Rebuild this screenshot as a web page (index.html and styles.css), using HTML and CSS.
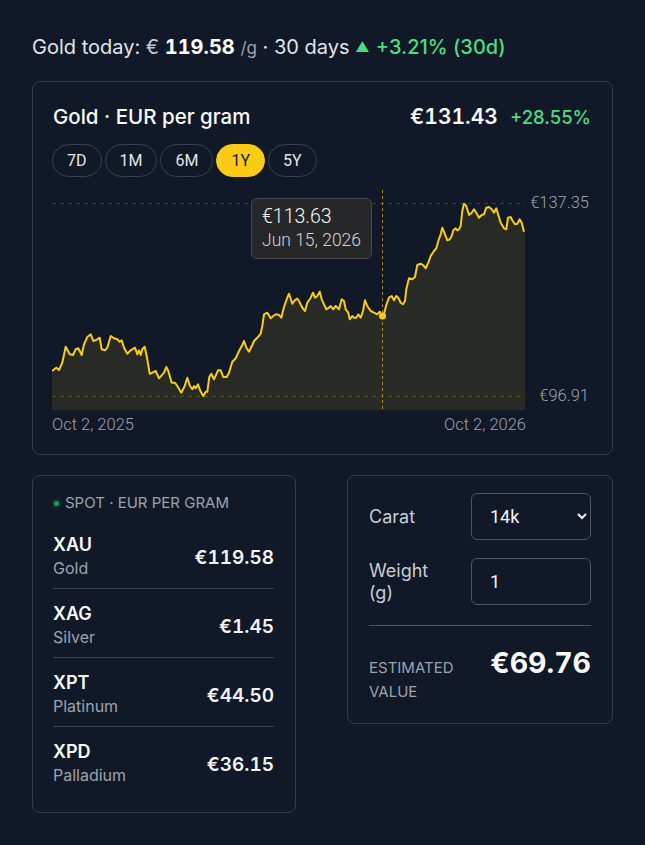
FILE: index.html
```html
<!DOCTYPE html>
<html lang="en">
    <head>
        <meta charset="utf-8">
        <meta name="viewport" content="width=device-width, initial-scale=1">
        <title>Gold price</title>
        <link rel="stylesheet" href="styles.css">
    </head>
    <body>
        <main class="page">
            <p class="ticker">
                Gold today: <span class="cur">€</span> <b class="ticker-price">119.58</b> <span class="unit">/g</span> · 30 days <span class="up"><span class="arrow">▲</span> +3.21% (30d)</span>
            </p>

            <section class="card chart-card">
                <header class="chart-head">
                    <h1 class="chart-title">Gold · EUR per gram</h1>
                    <div class="chart-quote">
                        <span class="quote-price">€131.43</span>
                        <span class="quote-change">+28.55%</span>
                    </div>
                </header>

                <div class="ranges">
                    <button type="button" class="range">7D</button>
                    <button type="button" class="range">1M</button>
                    <button type="button" class="range">6M</button>
                    <button type="button" class="range active">1Y</button>
                    <button type="button" class="range">5Y</button>
                </div>

                <div class="chart">
                    <svg class="chart-svg" width="538" height="250" viewBox="53 185 538 250">
                        <!-- area under the price line -->
                        <polygon class="area" points="53,409 53,370 57.3,366.7 60,369 63.3,361.7 66.7,345.7 70.7,353.3 74,354 76.7,348.3 79.3,347.3 82.7,354 85,343.3 88.3,336 91.7,333.3 94.3,340 98.3,338.3 100.7,336.7 102.7,348.3 106,349.3 108.3,346.7 111.7,335 115,337.3 118.3,338.3 120.7,340.7 122.7,339.3 125,346.7 128.3,352.7 131.7,349.3 136,346.7 138.3,353.3 140,349.3 141.7,354 143.3,348.3 145.7,345.7 148.3,358.3 150.7,372.7 153.3,371.7 156.7,370 160,377.3 165,371.7 167.3,366 169.3,370 172.7,381.7 176,381.7 178.3,385 182.3,391.7 185.7,385 188.3,376.7 191,385 193.3,388.3 195,385 196.7,387.3 199,383.3 201,389.3 204.3,395 206.7,390.7 208.3,390.7 210.3,376 212.3,372.7 215,378.3 219,369.3 221.7,369.3 224.3,376 227.7,376 230,371.7 233.3,360.7 236.7,357.3 240,350 243.3,344 245,340 247.7,347.3 250,350.7 253.3,344 255,340 259,336 261.7,332.7 263.3,325 265,313.3 268.3,311.7 271.7,317.3 274.3,315 276.7,313.3 280,314 282.3,316.7 285,306 288.3,296.7 290,292.7 293.3,302.7 295.7,299.3 298.3,297.7 300,300 303.3,306.7 306,310 308.3,301.7 311.7,296.7 314,291.7 316,296.7 318.3,295 320.7,290.7 322.7,298.3 325,303.3 327.3,308.3 330,306.7 331.7,305 334,308.3 336.7,305 340,308.3 342.7,298.3 345,300 346.7,308.3 349.3,311.7 350.7,318.3 353.3,315 355,316.7 357.3,316.7 359.3,313.3 361.7,316.7 364,310 366,299.3 368.3,305 371.7,310 375,311.7 378.3,313.3 380.7,310.7 383.3,315 385.3,311.7 387.3,304 390,296.7 392.7,295 395,299.3 397.3,295 399.3,296.7 401.7,301.7 404,303.3 406,300 407.3,288.3 410,277.3 413.3,278.3 416,276 418.3,264 421.7,262.7 424,264 426.7,267.3 429.3,261.7 431.7,255 435,250 437.3,247.3 439.3,240 441.7,233.3 443.3,226.7 446,233.3 448.3,239.3 450.7,238.3 452.7,235 454.3,229.3 456.7,227.3 458.3,229.3 460,228.3 461.7,225 463.3,210 465,202.7 467.3,205 470,214 472.7,211.7 475,208.3 477.3,211.7 480,216.7 482.7,214 485,213.3 487.3,206.7 490,206 492.7,208.3 495,211.7 497.3,207.3 499.3,214 501.7,221.7 505,227.3 507.3,228.3 509,216.7 511.7,216 513.3,219.3 516,223.3 518.3,222.7 520.7,218.3 522.7,221.7 525,230.7 526,231 526,409"/>

                        <!-- high / low guides -->
                        <line class="guide" x1="53" y1="202.5" x2="526" y2="202.5"/>
                        <line class="guide" x1="53" y1="395.5" x2="526" y2="395.5"/>
                        <text class="axis" x="590" y="207" text-anchor="end">€137.35</text>
                        <text class="axis" x="590" y="400" text-anchor="end">€96.91</text>

                        <polyline class="line" points="53,370 57.3,366.7 60,369 63.3,361.7 66.7,345.7 70.7,353.3 74,354 76.7,348.3 79.3,347.3 82.7,354 85,343.3 88.3,336 91.7,333.3 94.3,340 98.3,338.3 100.7,336.7 102.7,348.3 106,349.3 108.3,346.7 111.7,335 115,337.3 118.3,338.3 120.7,340.7 122.7,339.3 125,346.7 128.3,352.7 131.7,349.3 136,346.7 138.3,353.3 140,349.3 141.7,354 143.3,348.3 145.7,345.7 148.3,358.3 150.7,372.7 153.3,371.7 156.7,370 160,377.3 165,371.7 167.3,366 169.3,370 172.7,381.7 176,381.7 178.3,385 182.3,391.7 185.7,385 188.3,376.7 191,385 193.3,388.3 195,385 196.7,387.3 199,383.3 201,389.3 204.3,395 206.7,390.7 208.3,390.7 210.3,376 212.3,372.7 215,378.3 219,369.3 221.7,369.3 224.3,376 227.7,376 230,371.7 233.3,360.7 236.7,357.3 240,350 243.3,344 245,340 247.7,347.3 250,350.7 253.3,344 255,340 259,336 261.7,332.7 263.3,325 265,313.3 268.3,311.7 271.7,317.3 274.3,315 276.7,313.3 280,314 282.3,316.7 285,306 288.3,296.7 290,292.7 293.3,302.7 295.7,299.3 298.3,297.7 300,300 303.3,306.7 306,310 308.3,301.7 311.7,296.7 314,291.7 316,296.7 318.3,295 320.7,290.7 322.7,298.3 325,303.3 327.3,308.3 330,306.7 331.7,305 334,308.3 336.7,305 340,308.3 342.7,298.3 345,300 346.7,308.3 349.3,311.7 350.7,318.3 353.3,315 355,316.7 357.3,316.7 359.3,313.3 361.7,316.7 364,310 366,299.3 368.3,305 371.7,310 375,311.7 378.3,313.3 380.7,310.7 383.3,315 385.3,311.7 387.3,304 390,296.7 392.7,295 395,299.3 397.3,295 399.3,296.7 401.7,301.7 404,303.3 406,300 407.3,288.3 410,277.3 413.3,278.3 416,276 418.3,264 421.7,262.7 424,264 426.7,267.3 429.3,261.7 431.7,255 435,250 437.3,247.3 439.3,240 441.7,233.3 443.3,226.7 446,233.3 448.3,239.3 450.7,238.3 452.7,235 454.3,229.3 456.7,227.3 458.3,229.3 460,228.3 461.7,225 463.3,210 465,202.7 467.3,205 470,214 472.7,211.7 475,208.3 477.3,211.7 480,216.7 482.7,214 485,213.3 487.3,206.7 490,206 492.7,208.3 495,211.7 497.3,207.3 499.3,214 501.7,221.7 505,227.3 507.3,228.3 509,216.7 511.7,216 513.3,219.3 516,223.3 518.3,222.7 520.7,218.3 522.7,221.7 525,230.7"/>

                        <!-- hover crosshair -->
                        <line class="cursor" x1="383.5" y1="189" x2="383.5" y2="409"/>
                        <circle class="cursor-dot" cx="383.5" cy="315" r="3.5"/>

                        <text class="axis" x="53" y="429">Oct 2, 2025</text>
                        <text class="axis" x="527" y="429" text-anchor="end">Oct 2, 2026</text>
                    </svg>

                    <div class="tooltip">
                        <div class="tooltip-price">€113.63</div>
                        <div class="tooltip-date">Jun 15, 2026</div>
                    </div>
                </div>
            </section>

            <div class="lower">
                <section class="card spot">
                    <div class="spot-head"><span class="live-dot"></span>Spot · EUR per gram</div>
                    <ul class="metals">
                        <li class="metal">
                            <div>
                                <div class="metal-code">XAU</div>
                                <div class="metal-name">Gold</div>
                            </div>
                            <div class="metal-price">€119.58</div>
                        </li>
                        <li class="metal">
                            <div>
                                <div class="metal-code">XAG</div>
                                <div class="metal-name">Silver</div>
                            </div>
                            <div class="metal-price">€1.45</div>
                        </li>
                        <li class="metal">
                            <div>
                                <div class="metal-code">XPT</div>
                                <div class="metal-name">Platinum</div>
                            </div>
                            <div class="metal-price">€44.50</div>
                        </li>
                        <li class="metal">
                            <div>
                                <div class="metal-code">XPD</div>
                                <div class="metal-name">Palladium</div>
                            </div>
                            <div class="metal-price">€36.15</div>
                        </li>
                    </ul>
                </section>

                <section class="card calc">
                    <div class="calc-form">
                        <label class="calc-label" for="carat">Carat</label>
                        <select class="calc-input calc-select" id="carat">
                            <option>24k</option>
                            <option>22k</option>
                            <option>18k</option>
                            <option selected>14k</option>
                            <option>10k</option>
                        </select>
                        <label class="calc-label" for="weight">Weight (g)</label>
                        <input class="calc-input" id="weight" type="text" value="1">
                    </div>
                    <div class="calc-result">
                        <div class="result-label">Estimated value</div>
                        <div class="result-value">€69.76</div>
                    </div>
                </section>
            </div>
        </main>
    </body>
</html>
```

FILE: styles.css
```css
body {
    margin: 0;
    background: #111827;
    color: #f3f4f6;
    font-family: Inter, "Noto Sans", sans-serif;
}

.page {
    padding: 32px;
}

/* headline */

.ticker {
    margin: 0 0 18px;
    font-size: 20px;
    line-height: 30px;
    color: #e2e5e9;
    white-space: nowrap;
}

.ticker .cur {
    color: #c4c8cf;
}

.ticker-price {
    font-weight: 700;
    color: #fff;
    font-variant-numeric: tabular-nums;
}

.ticker .unit {
    font-size: 17px;
    color: #9ca3af;
}

.ticker .up {
    color: #4ade80;
    font-weight: 500;
}

.ticker .arrow {
    font-size: 14px;
    vertical-align: 2px;
    margin-right: 1px;
}

/* cards */

.card {
    border: 1px solid #353d4b;
    border-radius: 8px;
}

.chart-card {
    padding: 20px 21px 18px 19px;
}

.chart-head {
    display: flex;
    justify-content: space-between;
    align-items: center;
    height: 28px;
}

.chart-title {
    margin: 0 0 0 1px;
    font-size: 20.5px;
    font-weight: 500;
    color: #f9fafb;
}

.chart-quote {
    display: flex;
    align-items: baseline;
    gap: 12px;
}

.quote-price {
    font-size: 21px;
    font-weight: 600;
    font-variant-numeric: tabular-nums;
    color: #f9fafb;
}

.quote-change {
    font-size: 18.5px;
    font-weight: 500;
    color: #4ade80;
}

.ranges {
    display: flex;
    gap: 3px;
    margin-top: 14px;
}

.range {
    height: 33px;
    padding: 0 14px;
    border: 1px solid #3a4252;
    border-radius: 999px;
    background: transparent;
    color: #e5e7eb;
    font-family: Roboto, sans-serif;
    font-size: 16px;
}

.range.active {
    background: #facc15;
    border-color: #facc15;
    color: #111827;
}

/* chart */

.chart {
    position: relative;
    margin-top: 9px;
    height: 250px;
}

.chart-svg {
    display: block;
}

.chart-svg .area {
    fill: rgba(250, 204, 21, 0.1);
}

.chart-svg .line {
    fill: none;
    stroke: #facc15;
    stroke-width: 2;
    stroke-linejoin: round;
}

.chart-svg .guide {
    stroke: rgba(250, 204, 21, 0.22);
    stroke-width: 1;
    stroke-dasharray: 4 4;
}

.chart-svg .cursor {
    stroke: rgba(250, 204, 21, 0.6);
    stroke-width: 1;
    stroke-dasharray: 3 3;
}

.chart-svg .cursor-dot {
    fill: #facc15;
}

.chart-svg .axis {
    font-family: Roboto, sans-serif;
    font-size: 16.5px;
    font-weight: 300;
    fill: #9ca3af;
}

.tooltip {
    position: absolute;
    left: 199px;
    top: 12px;
    padding: 6px 10px 7px 10px;
    background: #262728;
    border: 1px solid #46484c;
    border-radius: 6px;
    font-family: Roboto, sans-serif;
    white-space: nowrap;
}

.tooltip-price {
    font-size: 19.5px;
    line-height: 24px;
    font-weight: 300;
    color: #f5f5f5;
}

.tooltip-date {
    font-size: 17.5px;
    line-height: 22px;
    font-weight: 300;
    color: #d4d4d4;
}

/* lower row */

.lower {
    display: grid;
    grid-template-columns: 264px 266px;
    justify-content: space-between;
    align-items: start;
    margin-top: 20px;
}

.spot {
    padding: 17px 21px 17px 20px;
}

.spot-head {
    display: flex;
    align-items: center;
    font-size: 15px;
    line-height: 20px;
    text-transform: uppercase;
    color: #9ca3af;
    margin-bottom: 7px;
}

.live-dot {
    width: 5px;
    height: 5px;
    border-radius: 50%;
    background: #16a34a;
    box-shadow: 0 0 4px rgba(34, 197, 94, 0.7);
    margin: 0 6px 0 1px;
}

.metals {
    list-style: none;
    margin: 0;
    padding: 0;
}

.metal {
    display: flex;
    justify-content: space-between;
    align-items: center;
    padding: 14px 0 8px;
}

.metal + .metal {
    border-top: 1px solid #374151;
}

.metal-code {
    font-size: 18px;
    line-height: 22px;
    font-weight: 600;
    color: #f9fafb;
}

.metal-name {
    font-size: 16px;
    line-height: 24px;
    color: #9ca3af;
}

.metal-price {
    font-size: 19px;
    font-weight: 600;
    font-variant-numeric: tabular-nums;
    color: #f3f4f6;
}

.calc {
    padding: 17px 21px 19px 21px;
}

.calc-form {
    display: grid;
    grid-template-columns: 86px 1fr;
    column-gap: 16px;
    row-gap: 18px;
    align-items: center;
}

.calc-label {
    font-size: 18px;
    line-height: 22px;
    color: #c9cdd4;
}

.calc-input {
    box-sizing: border-box;
    width: 100%;
    height: 47px;
    padding: 0 6px 0 18px;
    border: 1px solid #4b5563;
    border-radius: 6px;
    background: #111827;
    color: #f3f4f6;
    font-family: Roboto, sans-serif;
    font-size: 18px;
    color-scheme: dark;
}

/* the select adds its own inner padding */
.calc-select {
    padding-left: 14px;
}

.calc-result {
    display: flex;
    justify-content: space-between;
    align-items: flex-start;
    margin-top: 20px;
    padding-top: 23px;
    border-top: 1px solid #4b5563;
}

.result-label {
    max-width: 100px;
    margin-top: 7px;
    font-size: 15px;
    line-height: 24px;
    text-transform: uppercase;
    color: #9ca3af;
}

.result-value {
    font-size: 28.5px;
    line-height: 28px;
    font-weight: 700;
    font-variant-numeric: tabular-nums;
    color: #f9fafb;
}
```
